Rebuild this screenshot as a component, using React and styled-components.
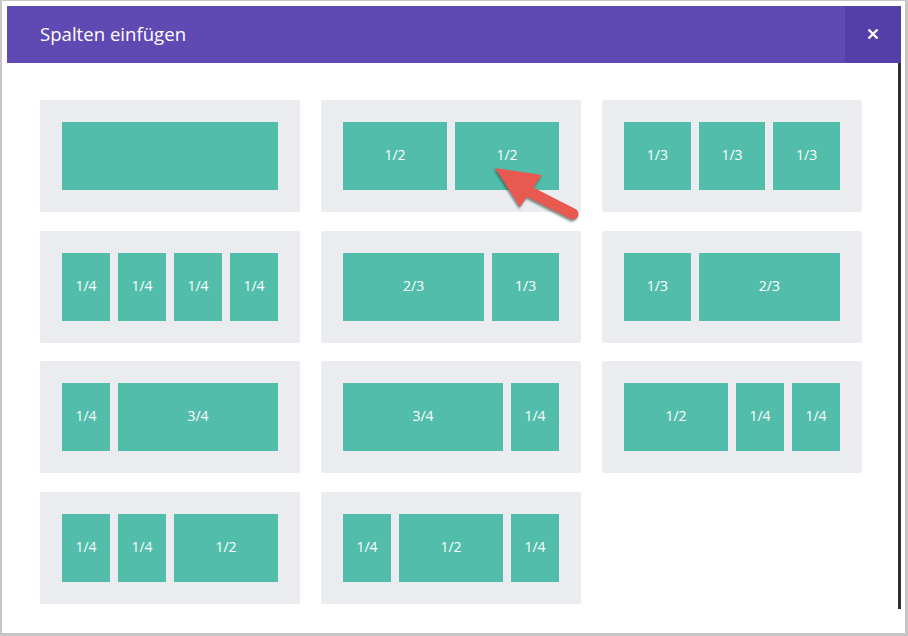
import React from 'react';
import styled, { createGlobalStyle } from 'styled-components';

const layouts = [
	[[12, '']],
	[[6, '1/2'], [6, '1/2']],
	[[4, '1/3'], [4, '1/3'], [4, '1/3']],
	[[3, '1/4'], [3, '1/4'], [3, '1/4'], [3, '1/4']],
	[[8, '2/3'], [4, '1/3']],
	[[4, '1/3'], [8, '2/3']],
	[[3, '1/4'], [9, '3/4']],
	[[9, '3/4'], [3, '1/4']],
	[[6, '1/2'], [3, '1/4'], [3, '1/4']],
	[[3, '1/4'], [3, '1/4'], [6, '1/2']],
	[[3, '1/4'], [6, '1/2'], [3, '1/4']],
];

function App() {
	return (
		<>
			<GlobalStyle />
			<Frame>
				<Modal>
					<Header>
						<Title>Spalten einfügen</Title>
						<CloseButton type="button" aria-label="close">
							<svg width="12" height="12" viewBox="0 0 12 12">
								<path
									d="M1.5 1.5L10.5 10.5M10.5 1.5L1.5 10.5"
									stroke="#fff"
									strokeWidth="2.4"
								/>
							</svg>
						</CloseButton>
					</Header>
					<Body>
						<Content>
							<LayoutGrid>
								{layouts.map((cols, i) => (
									<LayoutCard key={i}>
										{cols.map(([span, label], j) => (
											<Column key={j} $span={span}>
												{label}
											</Column>
										))}
									</LayoutCard>
								))}
							</LayoutGrid>
						</Content>
						<ScrollThumb />
						<Pointer width="110" height="70" viewBox="0 0 110 70">
							<g fill="#e85a50">
								<path d="M15 8 L62 15 L40 47 Z" />
								<path
									d="M46 30 L93 54"
									stroke="#e85a50"
									strokeWidth="11"
									strokeLinecap="round"
								/>
							</g>
						</Pointer>
					</Body>
				</Modal>
			</Frame>
		</>
	);
}

const GlobalStyle = createGlobalStyle`
	html, body {
		margin: 0;
		padding: 0;
		background: #c6c6c6;
	}
	body {
		font-family: "Open Sans", "Liberation Sans", sans-serif;
	}
`;

const Frame = styled.div`
	box-sizing: border-box;
	width: 903px;
	height: 632px;
	margin: 1px 0 0 2px;
	padding: 5px 0 0 5px;
	background: #fff;
`;

const Modal = styled.div`
	width: 894px;
`;

const Header = styled.header`
	display: flex;
	align-items: stretch;
	justify-content: space-between;
	height: 57px;
	background: #5f4ab4;
`;

const Title = styled.h1`
	display: flex;
	align-items: center;
	margin: 0 0 2px 33px;
	font-size: 18.6px;
	font-weight: 400;
	color: #fff;
`;

const CloseButton = styled.button`
	display: flex;
	align-items: center;
	justify-content: center;
	width: 56px;
	padding: 0 0 2px;
	border: 0;
	background: #533fa7;
	cursor: pointer;
`;

const Body = styled.div`
	position: relative;
	display: flex;
	align-items: flex-start;
`;

const Content = styled.div`
	flex: 1;
	padding: 37px 0 0 33px;
`;

const ScrollThumb = styled.div`
	width: 3px;
	height: 546px;
	background: #2e3036;
`;

const LayoutGrid = styled.div`
	display: grid;
	grid-template-columns: repeat(3, 260px);
	column-gap: 21px;
	row-gap: 18.5px;
`;

const LayoutCard = styled.div`
	display: grid;
	grid-template-columns: repeat(12, 1fr);
	column-gap: 8px;
	height: 112px;
	box-sizing: border-box;
	padding: 22px;
	background: #ebecf0;
	border-radius: 2px;
`;

const Column = styled.div`
	grid-column: span ${(p) => p.$span};
	display: flex;
	align-items: center;
	justify-content: center;
	box-sizing: border-box;
	height: 68px;
	padding-bottom: 3px;
	background: #52bdab;
	color: #fff;
	font-size: 14px;
`;

const Pointer = styled.svg`
	position: absolute;
	left: 473px;
	top: 97px;
	filter: drop-shadow(-1px 2px 1px rgba(40, 70, 60, 0.6));
`;

export default App;
